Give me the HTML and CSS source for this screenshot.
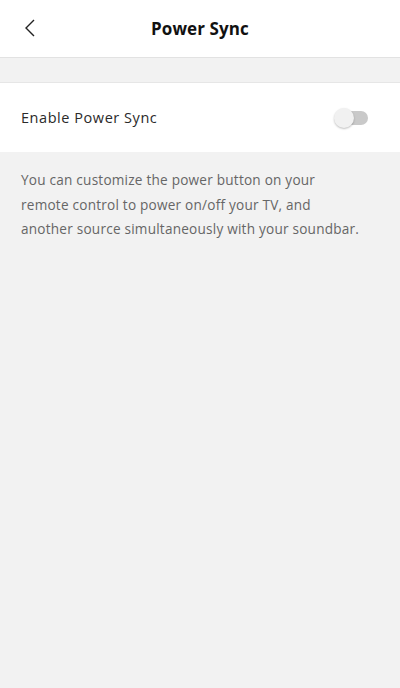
FILE: index.html
```html
<!DOCTYPE html>
<html lang="en">
<head>
    <meta charset="UTF-8">
    <meta name="viewport" content="width=device-width, initial-scale=1.0">
    <title>Power Sync</title>
    <link rel="stylesheet" href="styles.css">
</head>
<body>
    <div class="header">
        <button class="back-btn" aria-label="Back">
            <svg width="12" height="18" viewBox="0 0 12 18">
                <path d="M10 1 L2 9 L10 17" fill="none" stroke="#222" stroke-width="1.4"/>
            </svg>
        </button>
        <h1 class="title">Power Sync</h1>
    </div>

    <div class="spacer"></div>

    <div class="setting-row">
        <span class="setting-label">Enable Power Sync</span>
        <div class="toggle">
            <div class="toggle-track"></div>
            <div class="toggle-knob"></div>
        </div>
    </div>

    <p class="description">You can customize the power button on your remote control to power on/off your TV, and another source simultaneously with your soundbar.</p>
</body>
</html>
```

FILE: styles.css
```css
body {
    margin: 0;
    min-height: 100vh;
    background: #f2f2f2;
    font-family: 'Open Sans', sans-serif;
    color: #222;
}

.header {
    position: relative;
    height: 57px;
    background: #fff;
    border-bottom: 1px solid #e2e2e2;
    display: flex;
    align-items: center;
    justify-content: center;
}

.back-btn {
    position: absolute;
    left: 18px;
    top: 19px;
    padding: 0 6px;
    border: none;
    background: none;
    line-height: 0;
}

.title {
    margin: 0;
    font-size: 17px;
    font-weight: 700;
    letter-spacing: 0.1px;
    color: #111;
}

.spacer {
    height: 24px;
    border-bottom: 1px solid #e6e6e6;
}

.setting-row {
    height: 69px;
    background: #fff;
    display: flex;
    align-items: center;
    justify-content: space-between;
    padding: 0 32px 0 21px;
}

.setting-label {
    font-size: 14.5px;
    letter-spacing: 0.55px;
    color: #2a2a2a;
}

.toggle {
    position: relative;
    width: 34px;
    height: 20px;
}

.toggle-track {
    position: absolute;
    left: 4px;
    right: 0;
    top: 3px;
    height: 14px;
    border-radius: 7px;
    background: #c9c9c9;
}

.toggle-knob {
    position: absolute;
    left: 0;
    top: 0;
    width: 20px;
    height: 20px;
    border-radius: 50%;
    background: #f1f1f1;
    box-shadow: 0 1px 2px rgba(0, 0, 0, 0.25);
}

.description {
    margin: 16px 38px 16px 21px;
    font-size: 13.6px;
    line-height: 24.5px;
    letter-spacing: 0.22px;
    color: #666;
}
```
